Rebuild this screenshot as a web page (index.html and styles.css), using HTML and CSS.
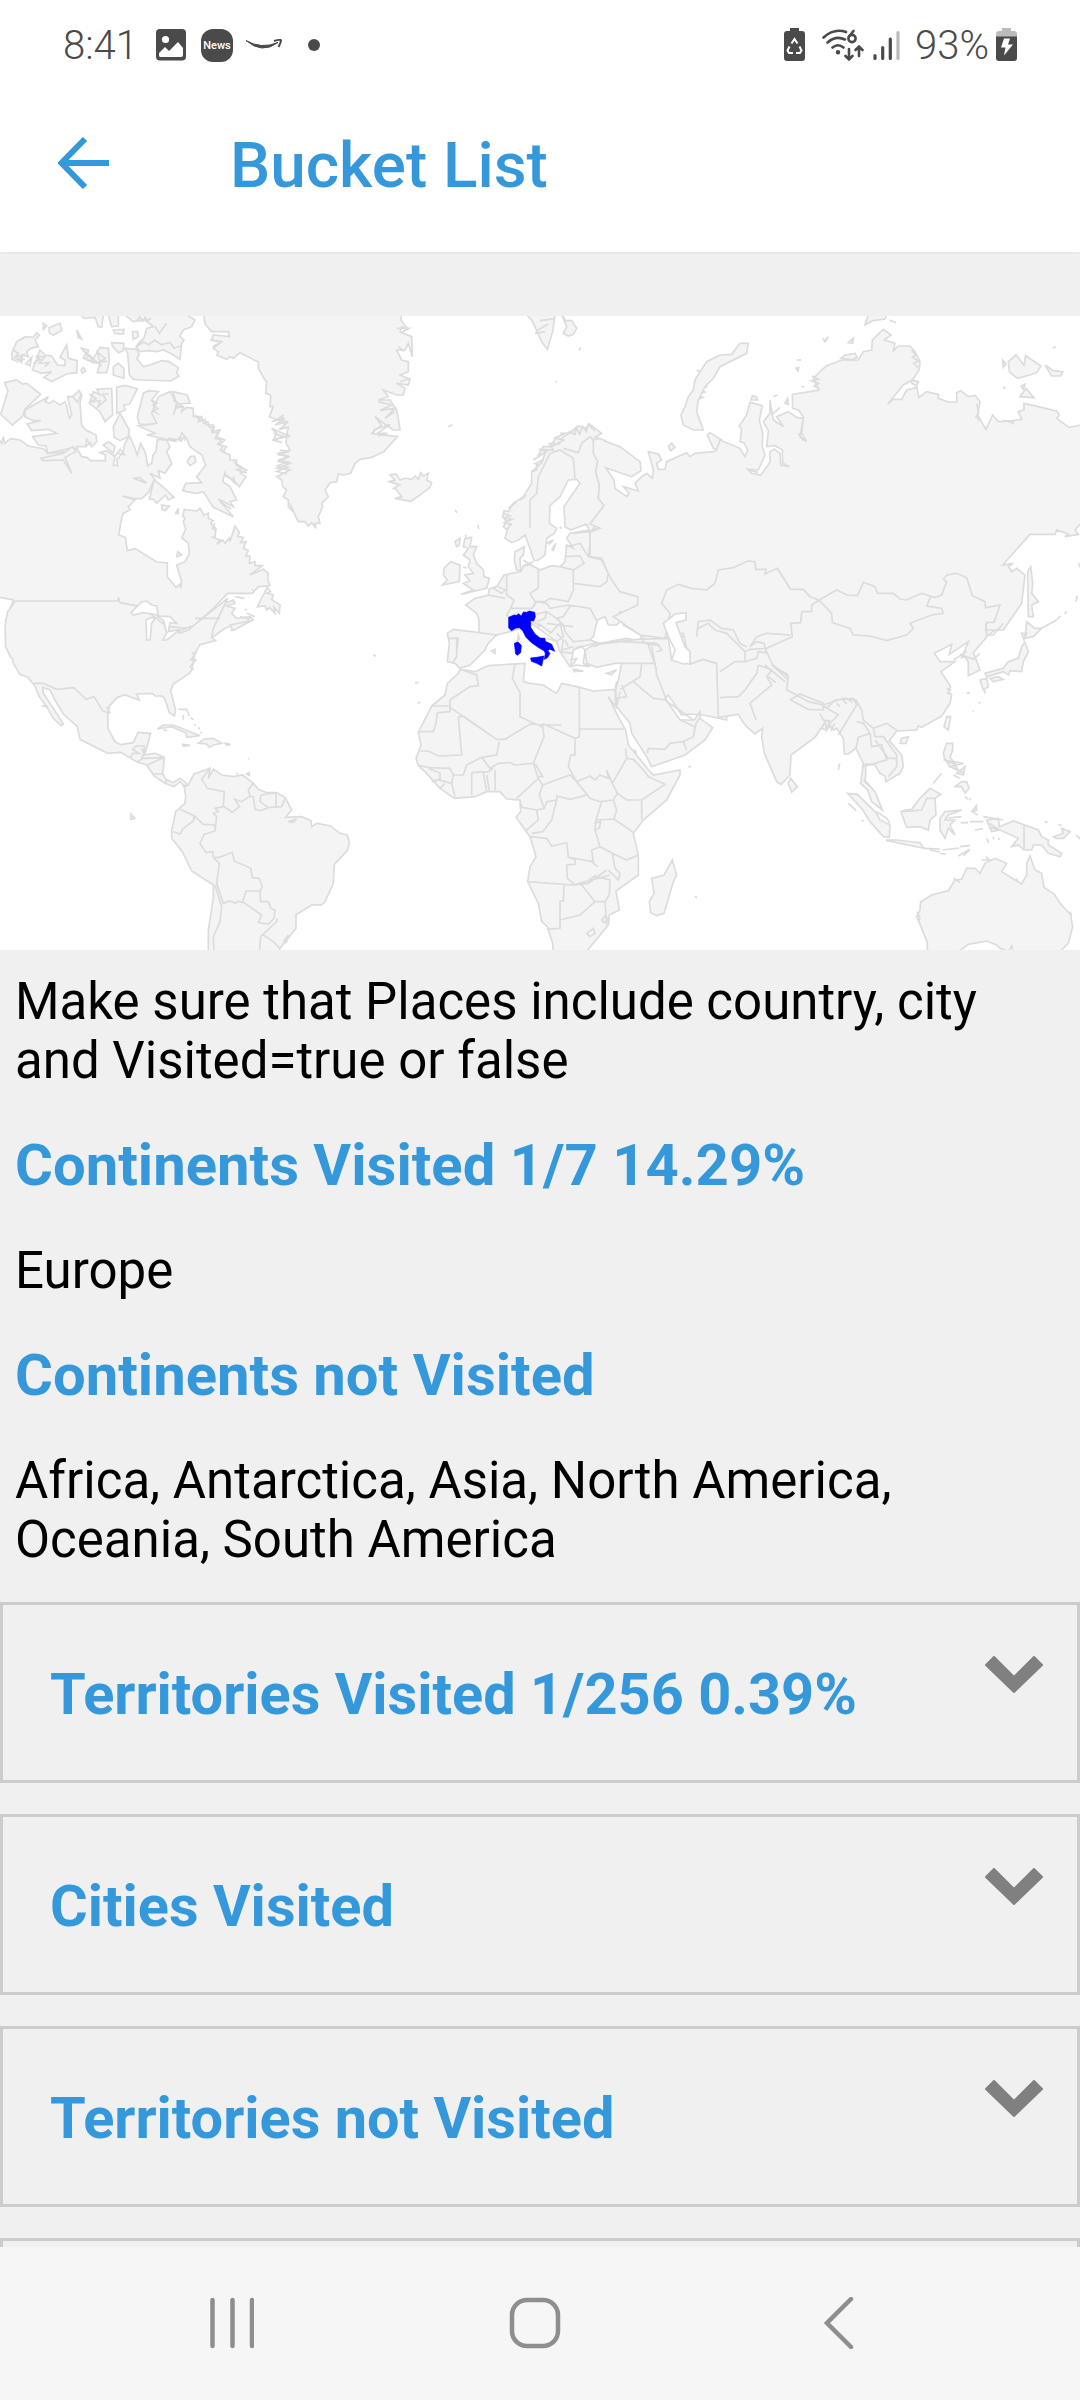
FILE: index.html
```html
<!DOCTYPE html>
<html lang="en">
<head>
  <meta charset="UTF-8">
  <meta name="viewport" content="width=device-width, initial-scale=1.0">
  <title>Bucket List</title>
  <link rel="stylesheet" href="styles.css">
</head>
<body>
  <div class="app">
    <div class="status">
      <span class="time">8:41</span>
      <svg class="ic-image" width="30" height="32" viewBox="0 0 30 32"><rect width="30" height="31.5" rx="4" fill="#4a4a4a"/><circle cx="9.5" cy="10.5" r="3.6" fill="#fff"/><path d="M3 28v-4l6-6 4 4 9-9 5 6v7q0 2-2 2H5q-2 0-2-1z" fill="#fff"/></svg>
      <span class="news">News</span>
      <svg class="ic-smile" width="38" height="12" viewBox="0 0 38 12"><path d="M1 1.500Q16 10.500 33 3.500Q17 15.500 1 1.500z" fill="#4a4a4a" stroke="#4a4a4a" stroke-width="1"/><path d="M29 2Q36 0 36 1.500T33.500 8" fill="none" stroke="#4a4a4a" stroke-width="2"/></svg>
      <span class="dot"></span>
      <span class="grow"></span>
      <svg class="ic-eco" width="21" height="34" viewBox="0 0 21 34"><path d="M6 0h9v3h3q3 0 3 3v24q0 3-3 3H3q-3 0-3-3V6q0-3 3-3h3z" fill="#4a4a4a"/><path d="M7.5 15.500l3-4.500 3 4.500M15.500 18.500l2 4-1.500 2.500h-4M9 25H5l-1.500-2.500 2-4" fill="none" stroke="#fff" stroke-width="2"/></svg>
      <svg class="ic-wifi" width="42" height="34" viewBox="0 0 42 34" fill="none" stroke="#4a4a4a" stroke-width="2.600" stroke-linecap="round"><path d="M1.500 9.500Q12 0 24 4M5.500 14.500Q14 7 23 11.500M10.500 19.500Q16 15 21.500 19.500"/><circle cx="16" cy="24.300" r="1" fill="#4a4a4a"/><path d="M31.500 3L27 8.500"/><circle cx="30" cy="10.500" r="3.600"/><path d="M27 21v10M23.500 28l3.500 3.500 3.500-3.500M37 28V18.500M33.500 22l3.500-3.500 3.500 3.500"/></svg>
      <svg class="ic-signal" width="27" height="31" viewBox="0 0 27 31" stroke-width="3.200" stroke-linecap="round" stroke="#4a4a4a"><path d="M2 25.500v3M9.700 17.500v11M17.300 9v19.500"/><path d="M25 2.500v26" stroke="#bbb"/></svg>
      <span class="percent">93%</span>
      <svg class="ic-battery" width="21" height="34" viewBox="0 0 21 34"><path d="M6 0h9v3h3q3 0 3 3v3H0V6q0-3 3-3h3z" fill="#bbb"/><path d="M0 8.500h21V30q0 3-3 3H3q-3 0-3-3z" fill="#4a4a4a"/><path d="M8 10.500h6l-2 6h5L8 27.500l1.500-8H5z" fill="#fff"/></svg>
    </div>
    <header>
      <svg class="back" width="52" height="52" viewBox="0 0 52 52"><path d="M27 2L3.500 26 27 50M4 26h47" fill="none" stroke="#3498db" stroke-width="6"/></svg>
      <h1>Bucket List</h1>
    </header>
    <main>
      <svg class="map" width="1080" height="634" viewBox="0 48 3240 1902" stroke-linejoin="miter">
        <!-- Canada, Arctic islands, Greenland -->
        <g>
          <path d="M-10 410L5 430 10 410 14 430 32 416 60 420 85 438 130 446 143 460 205 455 228 440 245 470 260 472 272 482 316 482 316 465 300 458 320 452 345 470 340 495 353 497 350 480 370 455 374 430 388 408 400 432 412 465 422 430 437 460 443 497 455 490 459 465 468 455 472 418 500 420 510 440 500 455 515 490 495 520 475 512 480 535 450 520 470 545 500 570 522 592 505 600 497 585 470 610 460 597 448 598 462 540 445 578 425 596 404 596 366 588 405 600 385 620 390 630 370 640 365 655 356 705 376 712 382 752 406 746 470 786 502 788 502 830 528 862 540 852 542 865 545 845 530 795 555 785 568 762 565 730 545 713 557 688 550 665 555 655 548 648 553 628 590 633 600 625 612 645 625 640 625 655 640 662 632 670 648 685 645 710 638 712 660 720 650 733 668 720 675 730 688 714 690 725 705 678 718 698 713 710 730 712 722 728 738 725 730 745 745 752 737 768 750 768 748 790 765 785 765 797 787 797 750 825 790 808 805 820 803 840 810 855 800 860 812 875 800 880 820 885 815 898 840 915 838 940 822 922 825 940 808 922 800 930 795 918 772 920 800 865 803 858 775 860 757 880 683 880 640 925 590 970 640 935 660 915 700 900 705 910 680 918 705 925 695 940 710 955 750 950 760 960 695 990 700 975 675 985 640 1010 500 1040 350 960 18 960 40 900 -10 890z"/>
          <path d="M14 248L50 240 68 252 80 250 122 283 75 328 67 350 37 375 2 343 24 273z"/>
          <path d="M75 330L145 290 135 305 148 310 160 302 180 315 195 305 200 318 208 355 215 345 203 290 220 290 237 272 245 285 240 310 245 375 258 390 288 405 290 425 275 440 260 418 258 440 230 440 225 450 210 445 143 460 138 438 115 435 98 410 170 400 145 388 95 392 82 372 122 362 98 362 75 350z"/>
          <path d="M35 160L50 125 76 110 100 112 110 98 118 106 105 120 115 140 92 145 80 155 85 170 68 165 65 188 55 175 48 182 36 178zM97 210L120 150 135 165 155 168 172 195 195 197 195 180 180 172 200 135 205 175 232 182 230 218 200 222 155 245 132 232 155 215 125 220zM147 83L180 70 185 92 160 106 148 98zM130 70L140 78 130 88zM77 192L95 172 90 197zM230 90L245 117 235 112zM243 45L252 55 285 52 295 80 305 82 310 45M325 45L335 80 355 78 355 45M340 90L372 88 370 102 345 100z"/>
          <path d="M245 145L265 150 262 165 280 175 300 142 325 145 328 185 320 218 292 218 300 190 275 185 250 175 258 160zM335 128L372 130 370 152 355 158 338 140zM340 200L355 190 372 205 372 235 340 225zM383 160L375 145 410 148 418 165 410 175 430 200 450 195 485 182 505 184 535 203 530 220 537 228 512 243 430 240 400 238 388 225z"/>
          <path d="M375 45L400 65 435 60 460 80 440 85 432 115 420 125 408 140 420 155 445 152 470 155 490 150 515 162 540 178 545 130 552 120 540 108 550 90 575 80 585 60 560 45M397 95L412 95 415 110 400 118zM465 80L478 100 500 70M350 262L375 256 412 266 388 313 372 315 376 330 350 340zM430 280L445 272 475 275 455 300 468 320 460 340 475 350 465 375 418 372 412 350 425 300z"/>
          <path d="M475 290L510 275 530 310 520 345 530 318 550 320 545 335 560 322 580 325 580 350 600 350 595 365 615 358 620 375 640 375 635 395 660 390 650 410 675 420 658 435 680 440 668 455 690 465 690 480 710 480 708 495 740 510 722 520 738 530 718 560 700 540 680 530 675 518 668 545 690 560 700 580 710 600 690 605 700 620 655 597 700 650 640 622 610 575 590 580 560 575 548 572 557 550 605 548 590 530 617 495 605 465 570 440 560 415 545 398 540 420 505 415 530 425 440 405 465 400 415 378 470 370 455 340zM518 275L562 285 570 310 530 312zM562 485L570 470 583 468 588 485 570 497z"/>
          <path d="M268 310L280 275 300 285 290 268 335 265 338 345 315 365 300 335zM340 380L360 340 388 390 385 410 360 422 342 412zM310 435L325 425 345 440 340 460zM485 615L508 618 495 632 486 628zM527 640L535 625 535 640zM533 755L545 765 530 770zM243 210L250 202 257 213 247 220zM218 290L237 272 243 285 232 307zM122 475L190 460 218 440 228 455 195 472 215 520 190 480 128 482zM400 535L420 533 440 550z"/>
          <path d="M610 40L615 72 635 95 685 95 688 110 640 105 635 120 665 125 640 145 655 155 650 165 680 178 690 170 700 175 720 158 775 186 775 205 795 240 800 245 797 280 812 285 810 320 820 320 808 350 830 360 850 345 840 365 860 365 850 380 865 385 860 400 870 410 815 385 830 400 820 420 860 410 858 430 870 450 835 460 865 470 835 485 870 490 832 505 870 510 830 530 845 540 848 560 860 570 850 590 865 600 865 620 880 635 890 655 895 665 915 665 925 678 935 668 948 685 945 670 960 670 955 650 968 620 965 610 985 590 975 570 990 548 1010 545 1015 522 1030 525 1052 520 1065 490 1080 478 1115 472 1152 455 1192 410 1115 400 1145 375 1125 350 1158 375 1180 390 1200 390 1195 355 1190 330 1170 300 1135 300 1165 290 1150 270 1190 285 1210 285 1215 265 1190 250 1225 255 1230 238 1200 225 1225 215 1225 185 1205 180 1190 150 1215 150 1225 130 1237 170 1235 110 1200 95 1205 80 1225 90 1203 60 1205 40z"/>
          <path class="rough" d="M40 150l15 10-10 12 25-8-15 20 20-8M100 190l20-12-10-8 25 0-18 20 30-2-12 12M248 152l22 14-14 10 24 12-12-22 34 30-10-40 24 20-20 10 26-2M268 282l20 14-16 10 28-4-6 18 24-20-10-18 18 0M410 62l10-12 8 14 8-12 6 10 12-8M410 140l20-14 16 8 18-14 20 14 26-6 12 16 20-6M455 300l16 10-12 6 14 10-14 6 18 12M345 468l16-20 12 16-18-4M520 300l30 20-24 4M585 345l14 14 6-8 6 20 12-6 6 18 14-2-6 16 18 0-10 18 20 4-12 14 16 4-8 14 14 4M700 485l30 20-20 4 30 10M680 525l24 24-4-20M815 365l40-10-30 20 40-10-28 24 30-8M820 400l30 10-30 10 26 8M840 450l28 4-34 10 34 6-34 10 30 6-34 12 36 4-36 12 30 8M870 610l10 24M630 120l32 6-24 14M660 605l34 22M645 670l-8 14 8 6M755 870l5 0M705 890l28 5M735 930l6-3M740 940l25 10M720 950l30 8M255 440l20-14M535 410l8 14 8-14 4 12M1135 305l40 10-34 16 44-6-30 30 30-20M1120 390l50-16-38 26 30 0-28 8M1190 85l36 0-24 14M1230 235l-30 10M1195 140l16 14"/>
        </g>
        <!-- USA, Central and South America -->
        <g transform="translate(0 960)">
          <path d="M45-57L352-57 356-65 360-52 425-40 500 20 570 25 683-65 640 25 635 52 647 62 600 74 585 100 575 150 568 160 520 192 512 212 527 270 523 288 508 278 495 238 487 228 465 228 457 220 410 222 418 240 375 225 352 232 328 258 323 285 324 325 345 365 362 374 400 368 414 337 452 340 437 395 430 405 465 400 493 412 488 460 497 478 520 488 540 475 560 490 553 500 540 485 522 500 495 490 462 468 440 435 410 425 362 397 323 400 240 358 232 320 190 282 165 240 150 210 128 202 130 220 150 250 190 312 183 317 160 295 140 260 118 230 103 195 83 172 60 163 40 130 38 115 32 112 17 80 15 20 22-22z"/>
          <path d="M553 500L565 495 582 462 630 445 625 475 640 447 665 465 700 470 728 465 760 490 775 508 800 518 830 518 855 532 875 570 857 592 905 590 933 602 935 620 950 610 990 617 1020 640 1042 645 1048 668 1042 692 1003 733 1000 790 975 845 965 855 937 854 888 884 888 925 840 985 835 1010 625 1010 625 930 640 835 640 795 575 753 547 695 515 655 515 632 527 575 555 550 557 530z"/>
          <path class="water" d="M393-22L425-55 440-57 455-45 470-42 475-15 430-22 400-15zM440 60L438 0 455-8 465-5 455 10 450 60zM490 0L470-12 510-10 530 10 510 8 505 35 540 28 500 60 488 60 500 40zM535 35L570 20 570 28 540 40z"/>
          <path d="M472 327L490 315 520 315 600 347 560 352 560 340 515 320zM595 370L612 357 640 355 665 370 640 375 628 382 620 372zM675 370L692 373 680 376zM548 373L570 376 550 378zM393 598L393 582 404 595zM690 15L750 3 700 32zM490 330l12 2M745 415l3 2M740 462l8-4 0 8zM708 460l6 2"/>
          <path class="rough" d="M103 190L130 190 170 208 222 203 258 238 282 230 308 272 328 280M585-5L660-5M320 260l10 20M390 415l8-15 20 0-20-12 10-10 25 0 0 25-10 12M412 425l18-10 60-2-48 22M425 385l8 20M460 462l28 0M497 478l2 14M575 100l12 0-14 20 14 0-16 20 10 10M630 445L605 478 622 505 673 515 670 558 697 577 718 560 705 538 725 545 748 530 760 530 765 568 780 572 805 563 845 560 855 535M760 490L745 510 750 528M783 525L780 545 805 562M783 525L828 518 828 560M540 568L583 588 610 613 645 615 645 633 612 643 600 670 618 698 638 695 640 712 658 712 697 697 703 723 752 745 757 773 778 775 787 800 780 813 738 813 728 845 785 885 775 908 805 912 822 895 825 870 812 865 805 845 782 845 780 813M583 588L580 603 550 625 540 642 520 635M645 633L650 590 640 580 655 575 645 565 670 560M640 712L658 730 650 790 670 850 688 843 708 850 715 843 728 848M645 795L665 860 660 905 640 950 642 1000M832 895L830 905 782 950 778 1000M790 945L820 965 840 985M850 965l15-20-5 20-12 8M865 605l25-8-10 10zM535 268l25 0 8 20M550 285v14M572 292l8 8M583 312l3 6M595 322l4 6M600 337l6 2M125 257l20 4"/>
        </g>
        <!-- Europe and Africa -->
        <g transform="translate(1080 0)">
          <path d="M720 685L630 700 620 715 640 745 620 735 615 785 600 800 575 797 540 810 505 790 520 785 490 797 485 812 470 810 463 780 465 755 493 740 490 765 480 775 482 815 432 825 410 860 388 867 385 885 345 895 317 915 350 940 357 960 357 998 280 988 262 1000 268 1030 262 1085 285 1090 300 1105 330 1095 375 1050 383 1032 410 1005 450 995 480 985 515 970 535 985 590 1025 600 1055 630 1100 640 1085 640 1050 655 1040 675 1038 720 1025 845 1030 925 1010 1100 1010 1100 800 800 700 735 680z"/>
          <path d="M690 697L680 672 632 690 615 680 612 620 660 550 650 538 625 540 600 590 570 617 568 670 590 685 583 700 560 715 555 765 535 780 522 782 510 745 495 705 475 720 455 728 435 715 442 690 430 680 440 665 428 650 432 632 445 635 460 610 490 590 515 550 515 515 530 510 530 495 545 490 555 460 535 465 550 440 570 440 590 410 600 418 640 390 655 378 675 385 688 372 725 400 705 412 730 420 750 430 730 650z"/>
          <path d="M88 545L105 540 90 525 108 522 120 540 135 535 155 538 165 528 175 538 182 518 190 528 205 520 200 540 215 548 210 562 180 585 152 604 105 595 125 590 108 568 100 565 120 555zM530 92L515 60 500 45 585 45 578 95 562 148 545 125zM605 45L618 62 635 62 650 85 640 103 625 108 610 100 620 80zM303 883L340 870 310 850 330 842 315 825 340 820 325 800 330 780 310 765 325 745 310 740 315 715 335 712 330 740 350 740 340 765 350 790 370 810 372 830 388 835 380 865zM247 855L262 840 250 825 252 805 272 785 300 795 298 845zM290 740L285 725 300 715 298 735zM265 380l12-6zM285 630l6 8zM354 675l2 12zM657 152l5-10zM587 244l4 2zM395 1053l10-5 0 12zM475 1005l4 12-8 8zM640 1108l30 5-28 2zM740 1120l30-10-15 14z"/>
          <path class="water" d="M700 1010L712 960 735 950 745 975 770 975 790 955 800 945 780 935 775 950 800 965 790 975 842 1005 845 1025 800 1015 720 1030 690 1020zM632 1100L640 1050 665 1040 675 1050 670 1090 690 1100 650 1095z"/>
          <g transform="translate(0 960)">
            <path d="M675 90L700 75 780 65 830 58 925 55 935 120 990 132 1030 118 1100 130 1100 300 1030 285 985 282 965 285 925 225 915 235 960 300 1003 300 1020 275 1020 295 1058 323 1035 360 975 405 875 440 860 410 815 340 810 310 770 260 767 210 775 180 785 130 765 130 710 142 680 130z"/>
            <path d="M300 148L345 155 385 137 495 130 490 185 510 190 550 195 590 220 605 190 650 200 700 213 765 208 767 260 745 230 780 300 797 330 805 375 870 455 880 465 960 450 960 465 920 540 850 600 820 640 835 705 835 765 768 813 778 870 748 885 745 915 675 1000 580 1000 578 970 562 920 545 905 535 850 503 785 510 740 528 710 510 650 468 592 482 575 480 540 440 537 420 515 380 515 345 530 283 535 240 505 195 455 175 437 168 415 183 375 175 337 215 258 255 225 262 190 295 160zM937 720L950 765 940 785 912 880 890 887 872 878 868 845 882 820 875 775 912 765zM985 440l8 0zM1005 828l6 6zM40 105l8 4zM165 188l10 0zM173 250l8-4zM700 80l15-5z"/>
            <path class="rough" d="M300 148L350 165 355 197 330 200 270 240 270 275 232 278 228 310 220 335 175 335M215 258L270 258M270 262L410 358 435 358 510 312 548 315 605 315M295 290L312 290 410 358M295 290L305 405 235 408 205 393 180 393M465 130L457 175 480 218 480 290 545 320 550 312 645 355 658 350 658 200M658 327L795 327M645 355L645 405 632 405 625 440 650 485 690 535 720 545 760 540 772 520 757 490 740 450 745 475 720 465 705 480 690 468 650 485M418 365L410 405 365 412 320 435 310 465 280 465 270 445 205 443 175 435M365 412L390 445 415 430 450 428 465 435 520 430 552 350 548 318M335 458L385 455 400 445M335 458L335 525M370 458L380 515M380 465L388 512M405 450L405 510M205 445L240 460 240 480 275 490 285 530M215 485L240 478M240 505L255 490M280 465L275 490M520 430L535 475 470 535M535 475L548 495 630 465 650 485M525 430L548 470 530 470M548 495L538 525 553 565 530 570 485 562 480 540M553 565L560 545 590 540 590 528 630 538 680 525M590 540L575 600 548 635 515 640M530 570L535 600 500 630M510 650L560 655 575 678 620 668 625 712 700 725 695 690 720 680 705 630 708 600 725 545M708 600L762 597 770 570 760 540M762 597L820 637M772 520L800 540 845 540 915 493 865 470 852 452 820 418 800 415 757 490M800 415L797 385M845 540L845 600M720 680L757 700 800 720 835 705M757 700L765 745 780 760 775 780 745 750M695 725L712 740M625 712L645 718 645 733 620 735 622 775 645 795 685 790 740 750M503 785L640 795 750 765M612 795L610 843 600 843 600 925 562 928M600 900L660 885 705 845 735 845 748 825 750 780 705 768 665 795 705 845M735 845L740 915M680 940L700 925 705 940 690 950zM725 900l10-12 10 10-12 10zM702 610l20-6-4 20-12 6M785 130L885 130 875 80M845 130L840 170 780 208M820 185L880 235 920 240M885 130L890 165 920 240M780 65L890 70 905 90 890 95M865 75L890 150M990 132L1030 118 1070 130 1075 230M915 240L1000 300M960 300L1005 320 1000 350 970 365 930 370 915 388 865 385 862 400M970 365L980 390M785 195L800 230 770 235M770 260L780 215M640 100L600 95 590 65 560 55M850 70L850 45M830 400l-8-12M765 205l5-20M1000 350l8-40 10-15"/>
          </g>
          <path class="rough" d="M535 805L535 865 510 880 525 905 555 905 570 895 625 905 640 870 640 810 600 800M640 850L720 860 740 845 745 820 725 780 685 770 690 735 692 697M615 740L640 735 660 730 685 770M615 770L660 768 672 790 640 810M640 700L690 695M440 825L440 885 462 900 452 925 515 925 530 905 560 910 570 925 625 915 690 925 712 965M452 925L440 945 450 955M357 998L410 1005M520 945L560 935 590 955 610 950 632 915M560 935L555 955 530 965M590 955L610 975 615 995 640 1025 690 1020M560 970L600 975 640 980M570 1000L600 970 610 1010 590 1025M590 1000l20 20-5 30 35-10M615 1020L625 1040M640 870L625 905M385 885L435 895M400 865L425 880 435 870 415 860M290 1010L290 1070 280 1085M265 1015L295 1015 290 1055M510 685L510 600 530 580 535 530 555 490 570 460 600 450 640 475 645 535M610 445L655 458 665 430 690 410 710 430 700 460M700 420L713 485 707 515 718 555 715 595 732 617 690 672M530 92l35-20M540 62l45-6M525 100l30-5M430 640l20 8-20 6 26 4-24 10 24 6M440 690l14-20M445 625l25-20M480 600l20-14M515 515l22-20-12-4 22-10M520 480l40-26-24-6 44 2-14-20M575 440l36-20-26-6 28-12M565 430l36 2M625 395l20 8 4-20 10 20 8-24 12 16 6-22 20 20M600 400l30 0M560 730l20-10-14 14M575 750l12-20-8 24M600 680l4 6M490 780l20 14-20 4M310 800l10 5M320 710l-5-5M90 545l30 10M790 970L850 985 900 1005M845 1025L870 1035 900 1035M535 970l40 30M520 965l20 12-8 4M630 1080l20-4-14 20M1010 210l20 10-16 10 30 4-30 14 24 12-34 6 30 10-32 10 26 6-30 14"/>
          <path d="M970 375L963 345 975 320 985 290 1000 270 1005 240 1020 215 1040 185 1080 165 1115 163 1140 130 1165 130 1160 160 1080 200 1060 235 1035 260 1015 300 1010 335 1030 390 1000 390zM925 440L935 430 945 442 932 452zM1042 405L1050 398 1085 420 1085 450 1060 445z"/>
          <path class="italy" d="M446 960L446 952 462 945 470 946 476 941 484 948 490 936 500 937 508 933 524 937 526 950 521 963 512 962 512 982 525 1002 540 1014 555 1015 556 1024 575 1033 584 1054 570 1048 563 1052 570 1060 562 1074 553 1078 556 1060 552 1052 534 1042 512 1026 498 1012 488 992 478 983 468 984 454 992 446 984zM463 1030L474 1026 484 1036 482 1058 472 1066 467 1062zM512 1074L530 1072 552 1068 545 1098 530 1090 514 1084z"/>
        </g>
        <!-- Asia and Oceania -->
        <g transform="translate(2160 0)">
          <path d="M-200 900L-170 830 80 760 220 830 430 830 560 880 700 800 850 880 850 970 800 1010 797 1015 760 1058 780 1110 745 1127 745 1085 735 1070 725 1073 735 1050 745 1025 688 1063 695 1033 643 1060 660 1085 705 1085 663 1115 692 1160 685 1175 695 1185 690 1210 665 1248 605 1282 595 1278 590 1290 530 1293 508 1322 545 1365 550 1400 540 1420 498 1445 495 1428 480 1420 465 1395 437 1392 437 1425 435 1442 465 1475 487 1530 455 1505 443 1470 422 1450 430 1390 408 1345 385 1362 373 1362 370 1315 350 1285 340 1290 330 1278 320 1290 303 1285 285 1312 213 1365 210 1425 183 1453 170 1445 133 1360 125 1310 128 1285 105 1302 80 1280 68 1265 55 1243-5 1252-10 1090-50 1078-90 1092-110 1000-180 1000z"/>
          <path d="M-380 420L-360 415-340 425-300 440-240 485-237 512-265 530-330 508-343 503-318 540-315 565-280 590-273 580-290 560-245 573-255 550-235 530-220 520-203 535-200 510-215 455-185 462-175 480-190 490-185 508-165 508-160 485-100 458-90 470-75 460-20 455-10 450 0 420 60 445 75 470 83 450 72 428 60 425 65 385 57 380 80 345 90 307 127 317 118 360 128 400 127 440 135 465 115 510 82 508 95 520 122 526 150 487 150 455 163 447 180 460 182 495 208 500 188 490 187 450 165 437 140 440 145 392 130 365 150 340 150 300 160 360 190 380 170 350 205 335 230 352 250 355 240 410 260 425 245 400 250 350 235 330 218 325 217 283 297 270 280 235 300 215 320 197 365 180 415 180 430 155 455 150 457 120 490 88 513 105 493 120 525 130 520 152 535 138 570 138 585 155 600 185 598 208 578 240 550 255 503 312 520 298 545 298 560 270 590 262 597 292 620 275 655 283 655 295 685 306 710 306 710 278 722 272 745 290 765 286 780 305 773 345 798 388 818 345 835 365 880 362 905 358 895 335 912 330 912 310 1010 333 1018 345 1010 355 1047 382 1095 373 1095 655 1065 690 1075 703 1035 710 1045 702 1010 690 1005 703 930 703 848 795 880 790 865 800 875 815 890 805 915 825 905 910 850 990 797 990 800 967 822 967 840 915 797 923 795 905 757 887 740 833 710 820 680 825 670 838 680 845 665 885 645 893 605 880 560 900 540 897 520 880 473 880 465 860 430 847 413 887 380 885 350 870 297 900 270 890 250 868 212 868 172 805 135 822 138 808 107 808 105 785 83 783 40 803-5 810-15 850-40 870-85 865-125 853-160 870-175 910-150 940-165 1015-240 1005-320 950-247 915-247 890-300 875-325 840-335 820-355 775-390 770-390 735-390 697-360 685-390 672-348 617-365 595-362 555-373 515-367 485-380 460z"/>
          <path class="water" d="M-170 970L-135 942-102 938-102 960-132 968-120 1000-105 1040-90 1055-90 1090-110 1092-145 1080-135 1050-155 1010z"/>
          <path d="M435 75L445 45 500 45 495 57 458 62zM865 185L888 165 912 195 917 167 963 198 950 218 930 225 892 235 868 215zM848 180l10 12-8 10zM900 290L918 265 942 293zM975 195L1000 212 1028 215 1022 228 995 228zM903 258l12-5-5 14zM850 260l6 6zM998 145l10-5zM93 300L97 287 108 290 113 300zM308 115L315 125 325 110M385 128L400 115 398 130zM508 60l20 8M362 175L375 165 405 160 412 172 395 180zM230 180l14 0M228 205l8-2-2 10zM245 260l8 0M160 290l12-5M155 345L180 322M195 310l8-15 2 18zM575 240L595 245 590 258 575 250z"/>
          <path d="M923 815L932 800 938 850 935 880 955 905 935 915 940 950 925 950zM920 965L945 985 965 985 940 1010 915 1015zM905 1000l15 0-8 20zM915 1027L925 1055 910 1085 905 1115 870 1112 865 1125 850 1115 800 1130 795 1120 850 1105 865 1085 895 1075 905 1040zM780 1140L800 1135 805 1160 790 1170zM810 1135L835 1130 850 1138 820 1145zM680 1250L692 1250 685 1290 672 1280zM545 1315L565 1310 558 1330 540 1330zM212 1435L232 1460 215 1477 205 1450z"/>
          <path d="M383 1480L412 1483 470 1540 480 1560 510 1575 508 1612 490 1610 450 1565 425 1525zM500 1620L530 1620 600 1628 612 1645 500 1622zM543 1535L555 1530 575 1528 600 1495 630 1465 662 1483 645 1495 648 1545 630 1560 625 1590 600 1580 560 1582zM680 1330L698 1330 698 1350 690 1372 705 1390 675 1380 670 1360zM640 1450L665 1420M705 1460L725 1445 740 1445 747 1465 735 1480 725 1460zM680 1385L700 1390 715 1410 690 1400zM710 1420L735 1400 730 1425zM660 1555L675 1535 725 1530 685 1545 675 1560 705 1560 690 1575 705 1605 685 1585 675 1615 660 1590zM800 1560L835 1555 838 1580 880 1563 955 1590 965 1610 985 1620 985 1635 1025 1660 1020 1670 985 1660 965 1635 940 1635 935 1650 912 1650 895 1635 875 1640 895 1615 840 1590 815 1595zM1000 1610L1030 1600 1025 1585 1050 1595 1030 1615 1008 1615zM1068 1605l15 14z"/>
          <path d="M622 1970L622 1928 597 1865 590 1850 600 1830 602 1805 635 1785 685 1772 705 1740 725 1738 740 1705 765 1705 780 1720 795 1690 825 1675 860 1690 845 1715 905 1752 920 1725 920 1690 930 1668 945 1710 965 1720 972 1762 1003 1782 1020 1810 1052 1845 1058 1880 1045 1930 1020 1955 880 1960 875 1938 865 1955 840 1945 830 1935 800 1923 745 1933 715 1955z"/>
          <path class="rough" d="M-70 1010L-65 965-30 960 5 985 40 990 60 1030 80 1040M-65 985L-35 970-15 990 20 1000 75 1055M172 805L212 868M297 900L275 915 275 935 245 935 242 968 212 970 217 1010 195 1020 140 1045 90 1048 75 1055 75 1085 110 1075 115 1055 140 1058 132 1030 110 1025 90 1040 110 1010 140 1000 212 1005M297 900L335 940 337 968 390 985 400 1005 450 1008 500 1022 560 1005 580 985 570 970 635 945 670 940 665 925 620 918 632 890M850 970L820 1005 800 1005 797 970M140 1055L158 1095 205 1130 200 1170 230 1185 265 1205 310 1215 370 1195 408 1200 425 1230 430 1260 460 1285 500 1270 530 1290M210 1200L240 1182 310 1210 310 1230 265 1228 212 1200M305 1215L355 1245 335 1265 310 1260 300 1240M320 1225L345 1200 400 1195 410 1215 355 1305M115 1095L110 1120 75 1170 55 1190 0 1193M115 1095L155 1110 140 1130 155 1155 90 1210 108 1260M75 1085L45 1085 0 1115M1010 960L965 985M135 1095l60 50M155 1095l50 45M170 1105l35 20M145 1130l22 18M350 1210l10 10M370 1200l10 12M385 1198l12 10M410 1265L430 1270 450 1300 415 1312 408 1345M450 1300L455 1340 485 1335 500 1380 465 1390 425 1400M460 1285L465 1310 490 1310 530 1365 530 1400 505 1430M465 1320L505 1375 530 1375M720 1063L760 1078 780 1060M430 1440l20 20M912 1575L912 1648M548 1535L605 1530 620 1495 645 1495M305 1285l10-20 5 24 8-24 6 24 10-18M700 1080L740 1055M575 150l12 16-10 6 20 12-16 6 14 14M276 228l20 10-22 4 22 8-14 8 16 8M770 310l6 30-8 10 12 12M850 360l30 10-4-10M470 1535l30 20 10 15M610 1645l50 2M630 1650l30 6M668 1650l50-6M720 1640l30-4M715 1668l35-20-20 20M660 1660l18 2M385 1510l24 22M425 1560l6 4M355 1410l4-20M755 1535l14-18 0 14-12 4 16 10M722 1568l22 0M750 1565l40 0M765 1590l24-4M800 1615l6 14M820 1610l0 8M835 1620l4-6M790 1550l60 10M808 1570l30 20-28-8M725 1550l-40 4M670 1380l60 10-40 10 44 20M700 1425l20 10M740 1180l10-2M776 1210l6-4M758 1232l4 2M1010 958l12-10M1034 942l6-8M1068 905l4-18M1076 790l4 12M785 1680l30 0M700 1735l20 12M592 1835l8 20-6 8M1050 1835l4 10M888 1735l6 10M735 1490l10 8M750 1495v6M798 1670l12 12M365 175l40 6M790 1165l6 16M680 1165l14 6M680 1180l14 0M975 1565l8 2M1015 1575l10 0M85 510l30 8M235 400l16 22"/>
        </g>
      </svg>
      <p>Make sure that Places include country, city and Visited=true or false</p>
      <h2>Continents Visited 1/7 14.29%</h2>
      <p>Europe</p>
      <h2>Continents not Visited</h2>
      <p>Africa, Antarctica, Asia, North America, Oceania, South America</p>
      <div class="panels">
        <div class="panel">
          <h2>Territories Visited 1/256 0.39%</h2>
          <svg class="chevron" width="58" height="38" viewBox="0 0 58 38"><path d="M9 1L29 21 49 1 57 9 29 36 1 9z"/></svg>
        </div>
        <div class="panel">
          <h2>Cities Visited</h2>
          <svg class="chevron" width="58" height="38" viewBox="0 0 58 38"><path d="M9 1L29 21 49 1 57 9 29 36 1 9z"/></svg>
        </div>
        <div class="panel">
          <h2>Territories not Visited</h2>
          <svg class="chevron" width="58" height="38" viewBox="0 0 58 38"><path d="M9 1L29 21 49 1 57 9 29 36 1 9z"/></svg>
        </div>
        <div class="panel"></div>
      </div>
    </main>
    <nav>
      <svg width="44" height="52" viewBox="0 0 44 52"><path d="M2.500 3v46M22.500 3v46M42 3v46"/></svg>
      <svg class="home" width="52" height="52" viewBox="0 0 52 52"><rect x="3" y="3" width="46" height="46" rx="15"/></svg>
      <svg class="prev" width="30" height="52" viewBox="0 0 30 52"><path d="M27 2L3 26 27 50"/></svg>
    </nav>
  </div>
</body>
</html>
```
FILE: styles.css
```css
html,
body {
  height: 100%;
  overflow: hidden;
}

body {
  margin: 0;
  font-family: Roboto, sans-serif;
  background: #f0f0f0;
  color: #000;
}

.app {
  display: flex;
  flex-direction: column;
  width: 1080px;
  height: 2400px;
}

.status {
  display: flex;
  align-items: center;
  height: 90px;
  padding: 0 63px;
  background: #fff;
  color: #4a4a4a;
  font-size: 40px;
  font-weight: 300;
}

.grow {
  flex: 1;
}

.time {
  width: 93px;
}

.news {
  width: 32px;
  margin-left: 15px;
  border-radius: 12px;
  background: #4a4a4a;
  color: #fff;
  font: 500 11px/33px Roboto, sans-serif;
  text-align: center;
}

.ic-smile {
  margin-left: 12px;
}

.dot {
  width: 12px;
  height: 12px;
  margin-left: 25px;
  border-radius: 50%;
  background: #4a4a4a;
}

.ic-wifi {
  margin-left: 17px;
}

.ic-signal {
  margin-left: 9px;
}

.percent {
  margin-left: 15px;
  margin-right: 7px;
}

header {
  display: flex;
  align-items: center;
  height: 162px;
  padding: 0 0 14px 58px;
  background: #fff;
  box-shadow: 0 1px 3px rgba(0, 0, 0, .06);
  box-sizing: border-box;
}

.back {
  margin-top: -2px;
}

h1 {
  margin: 2px 0 0 120px;
  color: #3498db;
  font-size: 63.8px;
  font-weight: 500;
}

main {
  flex: 1;
  min-height: 0;
  overflow: hidden;
  padding-top: 64px;
}

.map {
  display: block;
  background: #fff;
}

.map path {
  fill: #f4f4f4;
  stroke: #dcdcdc;
  stroke-width: 5;
}

.map .water {
  fill: #fff;
}

.map .rough {
  fill: none;
}

.map .italy {
  fill: #00f;
  stroke: #00f;
  stroke-width: 2;
}

p {
  margin: 22px 15px 0;
  font-size: 51px;
  line-height: 59px;
}

h2 {
  margin: 41px 15px 0;
  color: #3498db;
  font-size: 58px;
  font-weight: 700;
  line-height: 68px;
}

h2 + p {
  margin-top: 42px;
}

.panels {
  display: flex;
  flex-direction: column;
  gap: 31px;
  margin-top: 33px;
}

.panel {
  display: flex;
  justify-content: space-between;
  flex: none;
  height: 181px;
  padding: 0 34px 0 47px;
  border: 3px solid #ccc;
  box-sizing: border-box;
}

.panel h2 {
  margin: 55px 0 0;
  font-size: 57.7px;
}

.chevron {
  margin-top: 51px;
  fill: #808080;
  stroke: #808080;
  stroke-width: 2;
  stroke-linejoin: round;
}

nav {
  display: flex;
  align-items: center;
  height: 153px;
  padding: 0 0 2px 210px;
  box-sizing: border-box;
  background: #f6f6f6;
}

nav svg {
  fill: none;
  stroke: #8e8e8e;
  stroke-width: 4.5;
  stroke-linecap: round;
}

.home {
  margin-left: 255px;
}

.prev {
  margin-left: 263px;
}
```
